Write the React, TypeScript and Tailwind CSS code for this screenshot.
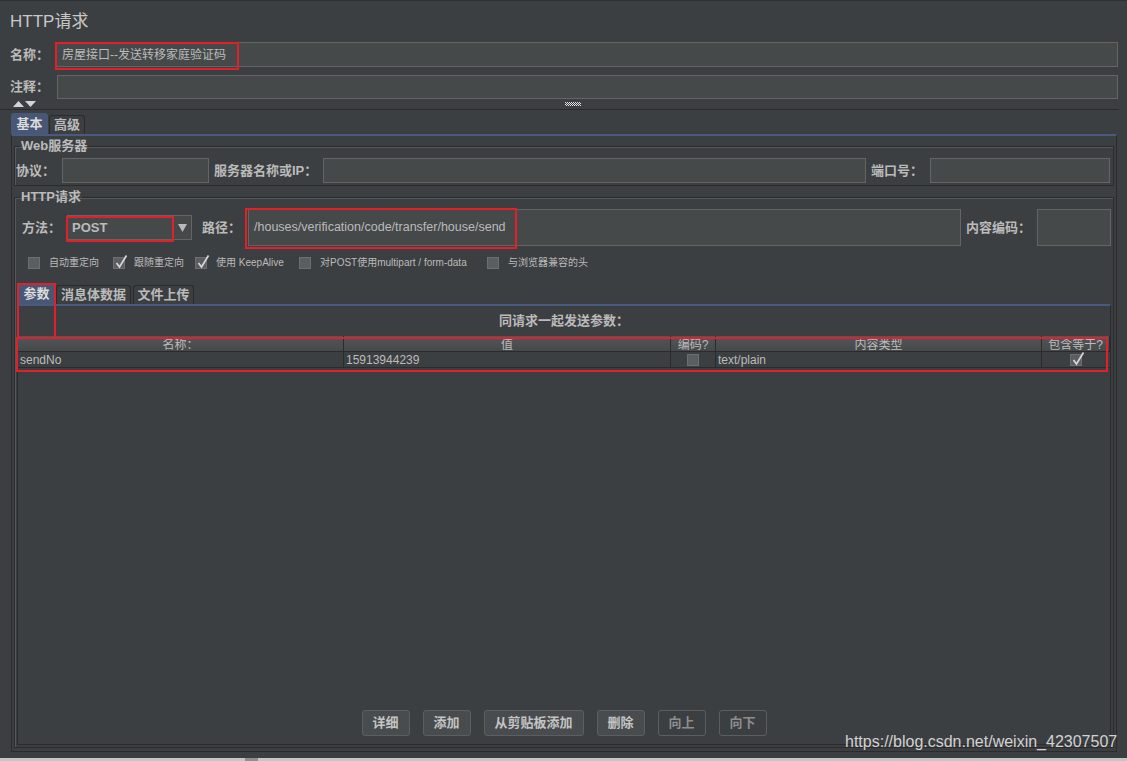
import React from "react";

function Field({ className = "", children }: { className?: string; children?: React.ReactNode }) {
  return (
    <div
      className={`bg-[#45494a] border border-[#646464] flex items-center px-[5px] text-[#bbbbbb] ${className}`}
    >
      {children}
    </div>
  );
}

function Check({ checked = false }: { checked?: boolean }) {
  return (
    <span className="relative w-[12px] h-[12px] shrink-0 bg-[#5b5e60] border border-[#6c6f71]">
      {checked && (
        <svg className="absolute left-[1px] top-[-4px]" width="13" height="15" viewBox="0 0 13 15">
          <path d="M1.5 9 L4.5 13 L11.5 1.5" fill="none" stroke="#d6d6d6" strokeWidth="1.7" />
        </svg>
      )}
    </span>
  );
}

function Option({ label, checked, width }: { label: string; checked?: boolean; width: string }) {
  return (
    <div className={`flex items-center gap-[9px] ${width}`}>
      <Check checked={checked} />
      <span className="text-[10px] leading-[12px] whitespace-nowrap text-[#bbbbbb]">{label}</span>
    </div>
  );
}

function Btn({ label, width, disabled }: { label: string; width: string; disabled?: boolean }) {
  return (
    <button
      className={`h-[26px] ${width} rounded-[3px] border border-[#5b5f61] text-[13px] font-bold ${
        disabled ? "bg-[#3c3f41] text-[#8e8e8e]" : "bg-[#484c4e] text-[#c4c4c4]"
      }`}
    >
      {label}
    </button>
  );
}

const headers = ["名称：", "值", "编码?", "内容类型", "包含等于?"];

export default function App() {
  return (
    <div className="relative w-[1127px] h-[761px] overflow-hidden bg-[#3c3f41] text-[#bbbbbb] border-t border-[#2e3133] flex flex-col font-['Liberation_Sans','Noto_Sans_CJK_SC',sans-serif]">
      {/* title */}
      <div className="h-[34px] pt-[9px] pl-[10px] text-[17px] leading-[24px] text-[#c8c8c8]">HTTP请求</div>

      {/* name */}
      <div className="mt-[7px] h-[25px] flex items-center pl-[10px] pr-[9px]">
        <span className="w-[46px] text-[13px] font-bold">名称：</span>
        <Field className="flex-1 h-[25px] text-[12px]">房屋接口--发送转移家庭验证码</Field>
      </div>

      {/* comment */}
      <div className="mt-[8px] h-[24px] flex items-center pl-[10px] pr-[9px]">
        <span className="w-[47px] text-[13px] font-bold">注释：</span>
        <Field className="flex-1 h-[24px]" />
      </div>

      {/* splitter */}
      <div className="h-[10px] flex items-start pl-[13px]">
        <svg width="24" height="8" viewBox="0 0 24 8" className="mt-[1px]">
          <path d="M0 7 L5.5 1 L11 7 Z" fill="#d4d4d4" />
          <path d="M12 1 L23 1 L17.5 7 Z" fill="#d4d4d4" />
        </svg>
        <svg width="16" height="4" viewBox="0 0 16 4" className="ml-[528px] mt-[3px]">
          {[0, 2, 4, 6, 8, 10, 12, 14].map((x) => (
            <g key={x}>
              <rect x={x} y={0} width="1" height="1" fill="#e0e0e0" />
              <rect x={x + 1} y={1} width="1" height="1" fill="#e0e0e0" />
              <rect x={x} y={2} width="1" height="1" fill="#e0e0e0" />
              <rect x={x + 1} y={3} width="1" height="1" fill="#e0e0e0" />
            </g>
          ))}
        </svg>
      </div>
      <div className="h-px w-[1119px] bg-[#2b2b2b]" />

      {/* tabs */}
      <div className="mt-[3px] h-[21px] pl-[11px] flex items-end text-[13px] font-bold">
        <div className="h-[21px] w-[37px] bg-[#475775] rounded-t-[3px] flex items-center justify-center text-[#dcdcdc]">
          基本
        </div>
        <div className="h-[19px] w-[36px] ml-px border border-b-0 border-[#2b2b2b] rounded-t-[3px] flex items-center justify-center">
          高级
        </div>
      </div>

      {/* main panel */}
      <div className="flex-1 mb-[6px] ml-[11px] w-[1106px] border border-[#2b2b2b] border-t-2 border-t-[#495a7e] pt-[3px] px-[2px] pb-[3px] flex flex-col">
        {/* web server */}
        <fieldset className="border border-[#2b2b2b] shadow-[inset_1px_1px_0_#55595b] pb-[2px]">
          <legend className="ml-[5px] px-px text-[13px] leading-[14px] font-bold">Web服务器</legend>
          <div className="mt-[5px] h-[25px] flex items-center pl-px pr-[3px] text-[13px] font-bold">
            <span className="w-[46px]">协议：</span>
            <Field className="w-[147px] h-[25px]" />
            <span className="ml-[5px] w-[109px]">服务器名称或IP：</span>
            <Field className="flex-1 h-[25px]" />
            <span className="ml-[5px] w-[59px]">端口号：</span>
            <Field className="w-[180px] h-[25px]" />
          </div>
        </fieldset>

        {/* http request */}
        <fieldset className="mt-[4px] flex-1 min-h-0 border border-[#2b2b2b] shadow-[inset_1px_1px_0_#55595b] pb-[2px] flex flex-col">
          <legend className="ml-[5px] px-px text-[13px] leading-[14px] font-bold">HTTP请求</legend>

          <div className="mt-[5px] h-[37px] flex items-center pl-[7px] pr-[2px] text-[13px] font-bold">
            <span className="w-[45px]">方法：</span>
            <div className="w-[125px] h-[25px] flex bg-[#45494a] border border-[#646464]">
              <span className="flex-1 pl-[4px] leading-[23px] text-[13px] font-bold">POST</span>
              <span className="w-[18px] border-l border-[#646464] flex items-center justify-center">
                <svg width="9" height="8" viewBox="0 0 9 8">
                  <path d="M0 0 L9 0 L4.5 8 Z" fill="#bbbbbb" />
                </svg>
              </span>
            </div>
            <span className="ml-[10px] w-[46px]">路径：</span>
            <Field className="flex-1 h-[37px] font-normal text-[12.5px]">/houses/verification/code/transfer/house/send</Field>
            <span className="ml-[5px] w-[71px]">内容编码：</span>
            <Field className="w-[74px] h-[37px]" />
          </div>

          <div className="mt-[11px] h-[12px] pl-[13px] flex items-center">
            <Option label="自动重定向" width="w-[85px]" />
            <Option label="跟随重定向" checked width="w-[82px]" />
            <Option label="使用 KeepAlive" checked width="w-[104px]" />
            <Option label="对POST使用multipart / form-data" width="w-[188px]" />
            <Option label="与浏览器兼容的头" width="w-[150px]" />
          </div>

          {/* inner tabs */}
          <div className="mt-[15px] h-[20px] pl-[3px] flex items-end text-[13px] font-bold">
            <div className="h-[20px] w-[37px] bg-[#475775] flex items-center justify-center text-[#dcdcdc]">参数</div>
            <div className="h-[19px] w-[75px] ml-px border border-b-0 border-[#2b2b2b] rounded-t-[3px] flex items-center justify-center">
              消息体数据
            </div>
            <div className="h-[19px] w-[61px] ml-[2px] border border-b-0 border-[#2b2b2b] rounded-t-[3px] flex items-center justify-center">
              文件上传
            </div>
          </div>

          <div className="flex-1 min-h-0 mx-[2px] border border-[#2b2b2b] border-t-2 border-t-[#495a7e] flex flex-col pb-[8px]">
            <div className="h-[30px] flex items-center justify-center text-[13px] font-bold">同请求一起发送参数：</div>

            <div className="grid grid-cols-[326px_327px_45px_326px_1fr] h-[16px] bg-linear-to-b from-[#53575a] to-[#45494b] border-b border-[#2b2b2b] text-[12px]">
              {headers.map((h) => (
                <div key={h} className="border-r border-[#2b2b2b] pt-[3px] text-center whitespace-nowrap leading-[12px]">
                  {h}
                </div>
              ))}
            </div>
            <div className="grid grid-cols-[326px_327px_45px_326px_1fr] h-[16px] border-b border-[#2b2b2b] text-[12px] leading-[14px]">
              <div className="border-r border-[#2b2b2b] pl-[2px] pt-px">sendNo</div>
              <div className="border-r border-[#2b2b2b] pl-[2px] pt-px">15913944239</div>
              <div className="border-r border-[#2b2b2b] flex items-center justify-center">
                <span className="w-[12px] h-[12px] bg-[#5b5e60] border border-[#6c6f71]" />
              </div>
              <div className="border-r border-[#2b2b2b] pl-[2px] pt-px">text/plain</div>
              <div className="flex items-center justify-center">
                <Check checked />
              </div>
            </div>

            <div className="flex-1" />

            <div className="h-[26px] flex justify-center gap-[13px]">
              <Btn label="详细" width="w-[48px]" />
              <Btn label="添加" width="w-[48px]" />
              <Btn label="从剪贴板添加" width="w-[100px]" />
              <Btn label="删除" width="w-[48px]" />
              <Btn label="向上" width="w-[48px]" disabled />
              <Btn label="向下" width="w-[48px]" disabled />
            </div>
          </div>
        </fieldset>
      </div>

      {/* bottom edge */}
      <div className="h-[3px] flex bg-[#c6c6c6]">
        <div className="ml-[245px] w-[13px] bg-[#8f8f8f]" />
      </div>

      {/* red highlight annotations */}
      <div className="absolute left-[55px] top-[41px] w-[184px] h-[28px] border-2 border-[#e3202a]" />
      <div className="absolute left-[66px] top-[215px] w-[108px] h-[26px] border-2 border-[#e3202a]" />
      <div className="absolute left-[245px] top-[207px] w-[272px] h-[41px] border-2 border-[#e3202a]" />
      <div className="absolute left-[17px] top-[282px] w-[39px] h-[56px] border-2 border-b-0 border-[#e3202a]" />
      <div className="absolute left-[16px] top-[336px] w-[1092px] h-[35px] border-2 border-[#e3202a]" />

      {/* watermark */}
      <div className="absolute left-[845px] top-[731px] text-[16px] leading-[20px] text-[#d2d2d2] font-['Liberation_Sans',sans-serif]">
        https://blog.csdn.net/weixin_42307507
      </div>
    </div>
  );
}
